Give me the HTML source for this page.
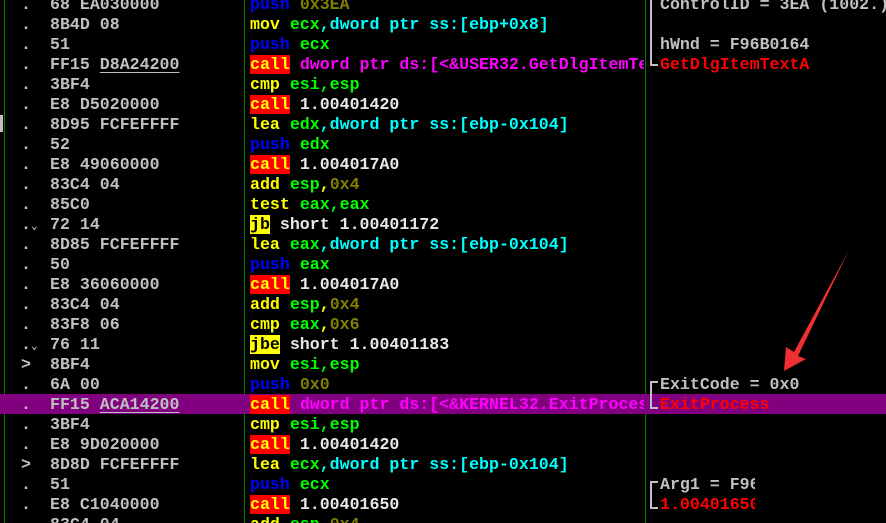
<!DOCTYPE html>
<html><head><meta charset="utf-8"><style>
html,body{margin:0;width:886px;height:523px;overflow:hidden;}
body{background:#000;position:relative;font-family:"Liberation Mono","DejaVu Sans Mono",monospace;font-weight:bold;font-size:16.6px;}
.r{position:absolute;left:0;width:886px;height:20px;line-height:21px;white-space:pre;}
.sel{background:#800080;}
.c{position:absolute;top:0;height:20px;overflow:hidden;}
.m{left:21px;width:28px;color:#c0c0c0;}
.h{left:50px;width:192px;color:#c0c0c0;}
.d{left:250px;width:394px;}
.k{left:660px;width:226px;color:#c0c0c0;}
.vl{position:absolute;top:0;width:1px;height:523px;background:#008000;}
.b{color:#0000ff}.y{color:#ffff00}.g{color:#00ff00}.cy{color:#00ffff}.o{color:#808000}.w{color:#e8e8e8}.mg{color:#ff00ff}.rd{color:#ff0000}
.cl{background:#ff0000;color:#ffff00}.jb{background:#ffff00;color:#000}
u{text-decoration:underline;text-underline-offset:3px}
.br{position:absolute;left:650px;width:6px;border-left:2px solid #c0c0c0;}
.sm{font-size:11px}
</style></head><body>
<div class="vl" style="left:4px"></div>
<div class="vl" style="left:244px"></div>
<div class="vl" style="left:645px"></div>
<div style="position:absolute;left:0;top:115px;width:3px;height:17px;background:#c0c0c0"></div>

<div class="r" style="top:-6px"><span class="c m">.</span><span class="c h">68 EA030000</span><span class="c d"><span class="b">push</span> <span class="o">0x3EA</span></span><span class="c k">ControlID = 3EA (1002.)</span></div>
<div class="r" style="top:14px"><span class="c m">.</span><span class="c h">8B4D 08</span><span class="c d"><span class="y">mov</span> <span class="g">ecx</span><span class="cy">,dword ptr ss:[ebp+0x8]</span></span></div>
<div class="r" style="top:34px"><span class="c m">.</span><span class="c h">51</span><span class="c d"><span class="b">push</span> <span class="g">ecx</span></span><span class="c k">hWnd = F96B0164</span></div>
<div class="r" style="top:54px"><span class="c m">.</span><span class="c h">FF15 <u>D8A24200</u></span><span class="c d"><span class="cl">call</span> <span class="mg">dword ptr ds:[&lt;&amp;USER32.GetDlgItemTextA&gt;]</span></span><span class="c k rd">GetDlgItemTextA</span></div>
<div class="r" style="top:74px"><span class="c m">.</span><span class="c h">3BF4</span><span class="c d"><span class="y">cmp</span> <span class="g">esi,esp</span></span></div>
<div class="r" style="top:94px"><span class="c m">.</span><span class="c h">E8 D5020000</span><span class="c d"><span class="cl">call</span> <span class="w">1.00401420</span></span></div>
<div class="r" style="top:114px"><span class="c m">.</span><span class="c h">8D95 FCFEFFFF</span><span class="c d"><span class="y">lea</span> <span class="g">edx</span><span class="cy">,dword ptr ss:[ebp-0x104]</span></span></div>
<div class="r" style="top:134px"><span class="c m">.</span><span class="c h">52</span><span class="c d"><span class="b">push</span> <span class="g">edx</span></span></div>
<div class="r" style="top:154px"><span class="c m">.</span><span class="c h">E8 49060000</span><span class="c d"><span class="cl">call</span> <span class="w">1.004017A0</span></span></div>
<div class="r" style="top:174px"><span class="c m">.</span><span class="c h">83C4 04</span><span class="c d"><span class="y">add</span> <span class="g">esp</span><span class="y">,</span><span class="o">0x4</span></span></div>
<div class="r" style="top:194px"><span class="c m">.</span><span class="c h">85C0</span><span class="c d"><span class="y">test</span> <span class="g">eax,eax</span></span></div>
<div class="r" style="top:214px"><span class="c m">.<span class="sm">⌄</span></span><span class="c h">72 14</span><span class="c d"><span class="jb">jb</span> <span class="w">short 1.00401172</span></span></div>
<div class="r" style="top:234px"><span class="c m">.</span><span class="c h">8D85 FCFEFFFF</span><span class="c d"><span class="y">lea</span> <span class="g">eax</span><span class="cy">,dword ptr ss:[ebp-0x104]</span></span></div>
<div class="r" style="top:254px"><span class="c m">.</span><span class="c h">50</span><span class="c d"><span class="b">push</span> <span class="g">eax</span></span></div>
<div class="r" style="top:274px"><span class="c m">.</span><span class="c h">E8 36060000</span><span class="c d"><span class="cl">call</span> <span class="w">1.004017A0</span></span></div>
<div class="r" style="top:294px"><span class="c m">.</span><span class="c h">83C4 04</span><span class="c d"><span class="y">add</span> <span class="g">esp</span><span class="y">,</span><span class="o">0x4</span></span></div>
<div class="r" style="top:314px"><span class="c m">.</span><span class="c h">83F8 06</span><span class="c d"><span class="y">cmp</span> <span class="g">eax</span><span class="y">,</span><span class="o">0x6</span></span></div>
<div class="r" style="top:334px"><span class="c m">.<span class="sm">⌄</span></span><span class="c h">76 11</span><span class="c d"><span class="jb">jbe</span> <span class="w">short 1.00401183</span></span></div>
<div class="r" style="top:354px"><span class="c m">&gt;</span><span class="c h">8BF4</span><span class="c d"><span class="y">mov</span> <span class="g">esi,esp</span></span></div>
<div class="r" style="top:374px"><span class="c m">.</span><span class="c h">6A 00</span><span class="c d"><span class="b">push</span> <span class="o">0x0</span></span><span class="c k">ExitCode = 0x0</span></div>
<div class="r sel" style="top:394px"><span class="c m">.</span><span class="c h">FF15 <u>ACA14200</u></span><span class="c d"><span class="cl">call</span> <span class="mg">dword ptr ds:[&lt;&amp;KERNEL32.ExitProcess&gt;]</span></span><span class="c k rd">ExitProcess</span></div>
<div class="r" style="top:414px"><span class="c m">.</span><span class="c h">3BF4</span><span class="c d"><span class="y">cmp</span> <span class="g">esi,esp</span></span></div>
<div class="r" style="top:434px"><span class="c m">.</span><span class="c h">E8 9D020000</span><span class="c d"><span class="cl">call</span> <span class="w">1.00401420</span></span></div>
<div class="r" style="top:454px"><span class="c m">&gt;</span><span class="c h">8D8D FCFEFFFF</span><span class="c d"><span class="y">lea</span> <span class="g">ecx</span><span class="cy">,dword ptr ss:[ebp-0x104]</span></span></div>
<div class="r" style="top:474px"><span class="c m">.</span><span class="c h">51</span><span class="c d"><span class="b">push</span> <span class="g">ecx</span></span><span class="c k" style="width:95px">Arg1 = F96B0164</span></div>
<div class="r" style="top:494px"><span class="c m">.</span><span class="c h">E8 C1040000</span><span class="c d"><span class="cl">call</span> <span class="w">1.00401650</span></span><span class="c k rd" style="width:95px">1.00401650</span></div>
<div class="r" style="top:514px"><span class="c m">.</span><span class="c h">83C4 04</span><span class="c d"><span class="y">add</span> <span class="g">esp</span><span class="y">,</span><span class="o">0x4</span></span></div>

<div class="br" style="top:0;height:64px;border-bottom:2px solid #c0c0c0"></div>
<div class="br" style="top:381px;height:24px;border-top:2px solid #c0c0c0;border-bottom:2px solid #c0c0c0"></div>
<div class="br" style="top:481px;height:24px;border-top:2px solid #c0c0c0;border-bottom:2px solid #c0c0c0"></div>

<svg style="position:absolute;left:0;top:0" width="886" height="523">
<polygon points="849,250 798,356 806,359 784,371 786,347 794,352" fill="#f03030"/>
</svg>
</body></html>
